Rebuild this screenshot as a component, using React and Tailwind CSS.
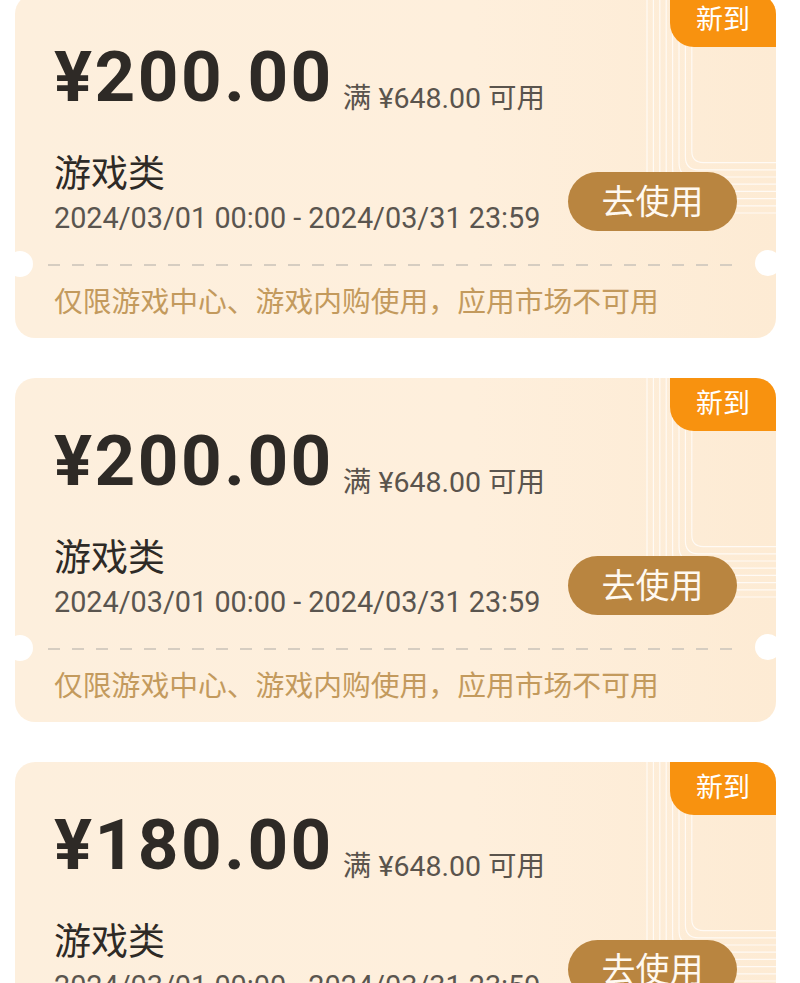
import React from "react";

const FONT = { fontFamily: "Roboto, 'Noto Sans CJK SC', sans-serif" };

function Lines() {
  const paths = [];
  for (let i = 0; i < 8; i++) {
    const x = 632 + i * 6.4;
    const y = 219 - i * 7.2;
    const r = 22 - i * 1.5;
    paths.push(
      <path
        key={i}
        d={`M${x} 0 V${y - r} Q${x} ${y} ${x + r} ${y} H761`}
        fill="none"
        stroke="#ffffff"
        strokeOpacity="0.75"
        strokeWidth="1.2"
      />
    );
  }
  return (
    <svg
      className="absolute inset-0 pointer-events-none"
      width="761"
      height="344"
      viewBox="0 0 761 344"
    >
      {paths}
    </svg>
  );
}

function Coupon({ amount }) {
  return (
    <div className="relative h-[344px] w-[761px] overflow-hidden rounded-[20px] bg-[linear-gradient(90deg,#fdefdd_0%,#feefdc_60%,#fdebd4_100%)]">
      <Lines />
      <div className="absolute right-0 top-0 flex h-[53px] w-[106px] items-center justify-center rounded-bl-[24px] bg-[#f8920f] text-[27px] leading-none text-white">
        新到
      </div>
      <div className="absolute left-[-8px] top-[257px] h-[26px] w-[26px] rounded-full bg-white" />
      <div className="absolute right-[-5px] top-[256px] h-[26px] w-[26px] rounded-full bg-white" />
      <div className="relative flex flex-col pl-[39px] pt-[47px]">
        <div className="flex items-baseline">
          <span className="text-[71px] font-bold leading-none tracking-[2.5px] text-[#2e2a26]">
            ¥{amount}
          </span>
          <span className="ml-[9px] translate-y-[7px] text-[28.5px] leading-none text-[#5a544d]">
            满 ¥648.00 可用
          </span>
        </div>
        <div className="mt-[44px] flex items-start justify-between pr-[39px]">
          <div className="flex flex-col">
            <span className="text-[37px] leading-none text-[#2e2a26]">游戏类</span>
            <span className="mt-[11px] text-[28.8px] leading-none text-[#5a554f]">
              2024/03/01 00:00 - 2024/03/31 23:59
            </span>
          </div>
          <div className="mt-[16px] flex h-[59px] w-[169px] items-center justify-center rounded-full bg-[#b98540] text-[34px] leading-none text-[#fff9f0]">
            去使用
          </div>
        </div>
        <svg className="-ml-[6px] mt-[31px]" width="687" height="2" viewBox="0 0 687 2">
          <line x1="0" y1="1" x2="687" y2="1" stroke="#d6cdc1" strokeWidth="2" strokeDasharray="12 12" />
        </svg>
        <div className="mt-[22px] whitespace-nowrap text-[28.8px] leading-none text-[#c39a5d]">
          仅限游戏中心、游戏内购使用，应用市场不可用
        </div>
      </div>
    </div>
  );
}

export default function App() {
  return (
    <div className="min-h-screen bg-white" style={FONT}>
      <div className="-mt-[6px] flex flex-col gap-[40px] pl-[15px]">
        <Coupon amount="200.00" />
        <Coupon amount="200.00" />
        <Coupon amount="180.00" />
      </div>
    </div>
  );
}
